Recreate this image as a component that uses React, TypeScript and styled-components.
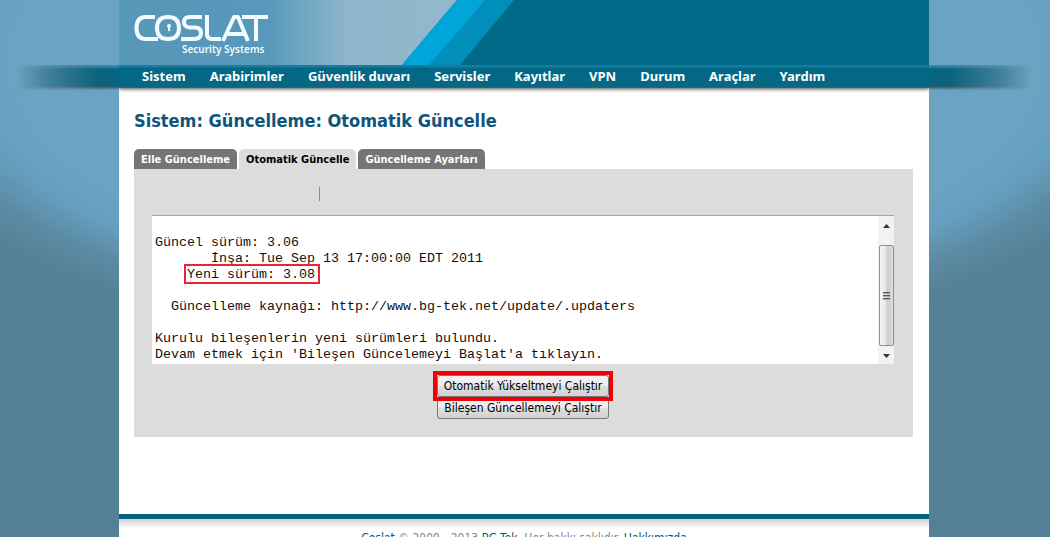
import React from 'react';
import styled, { createGlobalStyle } from 'styled-components';

const sans = "'DejaVu Sans Condensed', 'DejaVu Sans', Tahoma, sans-serif";

const GlobalStyle = createGlobalStyle`
  * { box-sizing: border-box; }
  html { height: 100%; background: #548096; }
  body {
    margin: 0;
    height: 100%;
    overflow: hidden;
    font-family: ${sans};
    font-size: 12px;
    background: radial-gradient(ellipse 671px 289px at 50% 60px, #6ba3c2 0%, #6ba3c2 76%, #659fbf 84%, #5b8aa2 93%, #548096 102%);
  }
  #root { height: 100%; }
`;

const Page = styled.div`
  display: flex;
  flex-direction: column;
  min-height: 100%;
  padding-right: 2px;
`;

const Column = styled.div`
  width: calc(100% - 238px);
  min-width: 700px;
  margin: 0 auto;
`;

const Header = styled(Column)`
  height: 65px;
  overflow: hidden;
  background: linear-gradient(90deg, #5797b8 0px, #5898ba 150px, #6ea5c1 180px, #8fb6cc 230px, #94b9ce 400px, #006988 400px);
`;

const Logo = styled.svg`
  display: block;
  width: 420px;
  height: 65px;
`;

const Tagline = styled.text`
  font-family: 'Noto Sans', sans-serif;
  font-size: 10px;
  font-weight: 600;
  fill: #f2fbff;
`;

const NavBand = styled.div`
  position: relative;
  z-index: 1;
  display: grid;
  grid-template-columns: 1fr minmax(700px, calc(100% - 238px)) 1fr;
  height: 22px;
`;

const Fade = styled.div<{ $side: 'left' | 'right' }>`
  height: 26px;
  margin-${(p) => p.$side}: 16px;
  background:
    linear-gradient(to ${(p) => p.$side}, transparent, rgba(50, 75, 85, 0.55)),
    linear-gradient(#1d7898, #006785 20%, #096580 75%, #2e4c58 88%, rgba(60, 80, 90, 0.2));
  mask-image:
    linear-gradient(to ${(p) => p.$side}, #000 0, #000 20%, rgba(0, 0, 0, 0.55) 65%, transparent 100%),
    linear-gradient(rgba(0, 0, 0, 0.5), #000 15%, #000 80%, transparent);
  mask-composite: intersect;
`;

const Nav = styled.nav`
  display: flex;
  align-items: center;
  gap: 24px;
  height: 22px;
  padding: 0 23px;
  background: linear-gradient(#1a7b9b 0, #1a7b9b 2px, #006988 3px, #086783 100%);
  box-shadow: 0 1px 1px #555, 0 3px 3px rgba(0, 0, 0, 0.45);
  clip-path: inset(0 0 -8px 0);
`;

const NavLink = styled.a`
  color: #fff;
  font-family: 'Noto Sans', Tahoma, sans-serif;
  font-size: 13px;
  line-height: 20px;
  font-weight: bold;
  white-space: nowrap;
  text-decoration: none;
`;

const Content = styled(Column)`
  flex: 1 0 auto;
  padding: 22px 16px 77px 15px;
  background: #fff;
`;

const Title = styled.h1`
  margin: 0;
  color: #0f547c;
  font-size: 18px;
  line-height: 24px;
  font-weight: bold;
`;

const Tabs = styled.div`
  display: flex;
  gap: 2px;
  margin-top: 16px;
`;

const Tab = styled.button<{ $active?: boolean }>`
  height: 20px;
  padding: 0 7px;
  border: 0;
  border-radius: 5px 5px 0 0;
  background: ${(p) => (p.$active ? '#dcdcdc' : '#757575')};
  color: ${(p) => (p.$active ? '#000' : '#fff')};
  font-family: ${sans};
  font-size: 11px;
  font-weight: bold;
  white-space: nowrap;
`;

const Panel = styled.section`
  display: flex;
  flex-direction: column;
  min-height: 268px;
  padding: 18px 19px 18px 18px;
  background: #dcdcdc;
`;

const ProgressTick = styled.div`
  width: 1px;
  height: 14px;
  margin: 0 0 14px 167px;
  background: #8d8d8d;
`;

const Output = styled.div`
  position: relative;
  display: flex;
  height: 149px;
  border-top: 1px solid #a5a5a5;
  background: #fff;
`;

const Log = styled.textarea`
  flex: 1;
  height: 148px;
  padding: 3px 3px 0;
  border: 0;
  outline: 0;
  resize: none;
  overflow: hidden;
  background: #fff;
  color: #111;
  font-family: 'Liberation Mono', 'Courier New', monospace;
  line-height: 16px;
  white-space: pre;
`;

const ScrollTrack = styled.div`
  display: flex;
  flex-direction: column;
  align-items: center;
  width: 16px;
  padding: 8px 0 6px;
  background: #f2f2f2;
`;

const Arrow = styled.svg`
  width: 7px;
  height: 4px;
`;

const Thumb = styled.div`
  display: flex;
  flex-direction: column;
  align-items: center;
  justify-content: center;
  gap: 1px;
  width: 15px;
  height: 101px;
  margin: 17px 0 8px;
  border: 1px solid #8f8f8f;
  border-radius: 2px;
  background: linear-gradient(90deg, #f6f6f6, #e6e6e8 45%, #cdcdd0 55%, #dcdcde);
`;

const Grip = styled.i`
  width: 7px;
  height: 2px;
  background: linear-gradient(#555 50%, #aaa 50%);
`;

const VersionMark = styled.div`
  position: absolute;
  left: 32px;
  top: 48px;
  width: 136px;
  height: 20px;
  border: 2px solid #ea2430;
  pointer-events: none;
`;

const Actions = styled.div`
  display: flex;
  flex-direction: column;
  align-items: center;
  padding-top: 7px;
`;

const Highlight = styled.div`
  position: relative;
  z-index: 1;
  display: flex;
  border: 4px solid #f00008;
`;

const ActionButton = styled.button`
  height: 22px;
  padding: 0 6px;
  border: 1px solid #777;
  border-radius: 3px;
  background: linear-gradient(#f3f3f3, #ececec 48%, #dedede 52%, #d2d2d2);
  color: #000;
  font-family: ${sans};
  font-size: 12px;
  line-height: 18px;
  white-space: nowrap;
`;

const Second = styled.div`
  display: flex;
  margin-top: -4px;
`;

const Footer = styled(Column)`
  height: 23px;
  padding-top: 11px;
  overflow: hidden;
  border-top: 5px solid #06637f;
  background: linear-gradient(#cfd0d3, #fff 9px);
  color: #888;
  font-size: 12px;
  line-height: 16px;
  text-align: center;
`;

const FooterLink = styled.a`
  color: #0f547c;
  text-decoration: none;
`;

const menu = ['Sistem', 'Arabirimler', 'Güvenlik duvarı', 'Servisler', 'Kayıtlar', 'VPN', 'Durum', 'Araçlar', 'Yardım'];

const log = [
  '',
  'Güncel sürüm: 3.06',
  '       İnşa: Tue Sep 13 17:00:00 EDT 2011',
  '    Yeni sürüm: 3.08',
  '',
  '  Güncelleme kaynağı: http://www.bg-tek.net/update/.updaters',
  '',
  'Kurulu bileşenlerin yeni sürümleri bulundu.',
  "Devam etmek için 'Bileşen Güncelemeyi Başlat'a tıklayın.",
].join('\n');

export default function App() {
  return (
    <Page>
      <GlobalStyle />
      <Header as="header">
        <Logo viewBox="0 0 420 65" role="img" aria-label="COSLAT Security Systems">
          <path d="M338 0H420V65H283Z" fill="#006988" />
          <path d="M338 0H367L311 65H283Z" fill="#00a5d9" />
          <path d="M366 0H395L341 65H310Z" fill="#008fba" />
          <g fill="none" stroke="#f2fbff" strokeWidth="4" strokeLinejoin="round">
            <path d="M36 17H27Q17.500 17 17.500 28T27 39H39" />
            <path d="M49 17Q60 17 60 28T49 39T38 28T49 17Z" />
            <path d="M83 17H71Q65 17 65 22T71 27.500H76Q82 27.500 82 33T76 39H62" />
            <path d="M88 15V34Q88 39 93 39H102" />
            <path d="M104 41L115 17H119L129 41M109 34H125" />
            <path d="M123 17H149M137 17V41" />
          </g>
          <circle cx="50" cy="26" r="2" fill="#f2fbff" />
          <path d="M49 27H51V31H49Z" fill="#f2fbff" />
          <Tagline x="63" y="53">Security Systems</Tagline>
        </Logo>
      </Header>
      <NavBand>
        <Fade $side="left" />
        <Nav>
          {menu.map((m) => (
            <NavLink href="#" key={m}>{m}</NavLink>
          ))}
        </Nav>
        <Fade $side="right" />
      </NavBand>
      <Content as="main">
        <Title>Sistem: Güncelleme: Otomatik Güncelle</Title>
        <Tabs role="tablist">
          <Tab role="tab">Elle Güncelleme</Tab>
          <Tab role="tab" aria-selected $active>Otomatik Güncelle</Tab>
          <Tab role="tab">Güncelleme Ayarları</Tab>
        </Tabs>
        <Panel>
          <ProgressTick />
          <Output>
            <Log readOnly aria-label="Güncelleme çıktısı" value={log} />
            <ScrollTrack>
              <Arrow viewBox="0 0 7 4"><path d="M0 4L3.500 0L7 4Z" fill="#333" /></Arrow>
              <Thumb><Grip /><Grip /><Grip /></Thumb>
              <Arrow viewBox="0 0 7 4"><path d="M0 0H7L3.500 4Z" fill="#333" /></Arrow>
            </ScrollTrack>
            <VersionMark />
          </Output>
          <Actions>
            <Highlight><ActionButton>Otomatik Yükseltmeyi Çalıştır</ActionButton></Highlight>
            <Second><ActionButton>Bileşen Güncellemeyi Çalıştır</ActionButton></Second>
          </Actions>
        </Panel>
      </Content>
      <Footer as="footer">
        <FooterLink href="#">Coslat</FooterLink> © 2009 - 2013 <FooterLink href="#">BG-Tek</FooterLink>. Her hakkı saklıdır. <FooterLink href="#">Hakkımızda</FooterLink>
      </Footer>
    </Page>
  );
}
